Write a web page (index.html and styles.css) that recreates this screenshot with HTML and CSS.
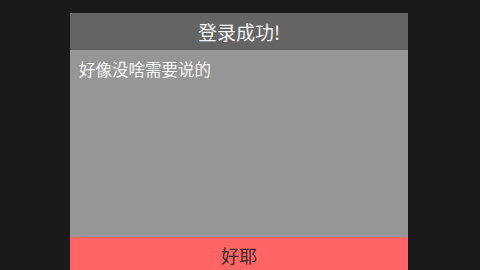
FILE: index.html
```html
<!DOCTYPE html>
<html lang="zh">
<head>
<meta charset="utf-8">
<link rel="stylesheet" href="styles.css">
</head>
<body>
<div class="dialog">
  <div class="title">登录成功!</div>
  <div class="content">好像没啥需要说的</div>
  <div class="button">好耶</div>
</div>
</body>
</html>
```

FILE: styles.css
```css
html, body {
  margin: 0;
  padding: 0;
  width: 480px;
  height: 270px;
  overflow: hidden;
  background: #191919;
  font-family: "Noto Sans CJK SC", "Noto Sans", sans-serif;
}
.dialog {
  margin: 13px 0 0 70px;
  width: 338px;
  display: flex;
  flex-direction: column;
}
.title {
  height: 37px;
  background: #646464;
  color: #f4f4f4;
  font-size: 19px;
  line-height: 38px;
  text-align: center;
}
.content {
  height: 187px;
  background: #969696;
  color: #f6f6f6;
  font-size: 16.5px;
  line-height: 24px;
  padding: 7px 9px;
  box-sizing: border-box;
}
.button {
  height: 40px;
  background: #ff6565;
  color: #3a2a2a;
  font-size: 18px;
  line-height: 36px;
  text-align: center;
}
```
